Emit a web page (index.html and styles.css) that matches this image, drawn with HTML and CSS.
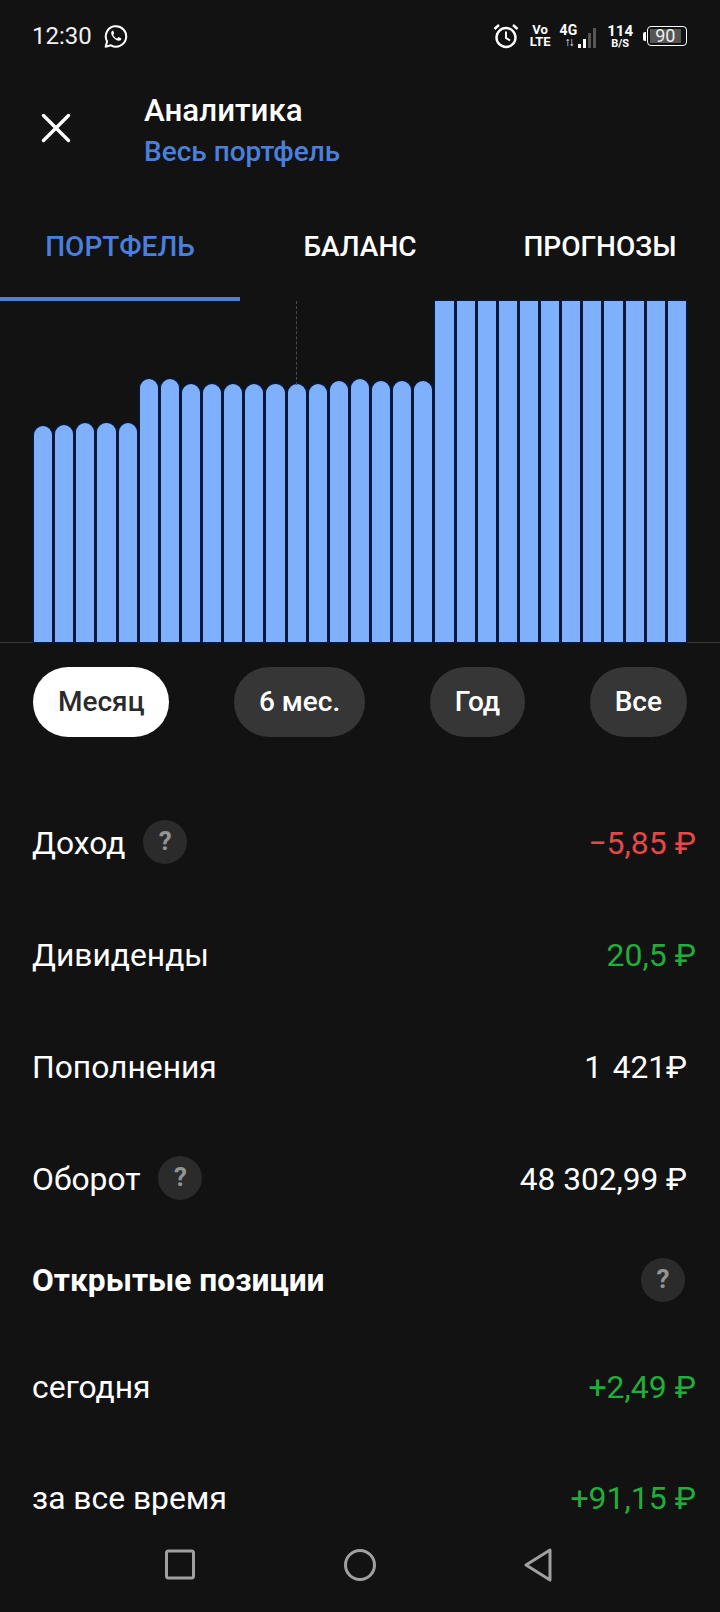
FILE: index.html
```html
<!DOCTYPE html>
<html lang="ru">
<head>
  <meta charset="UTF-8">
  <title>Аналитика</title>
  <link rel="stylesheet" href="styles.css">
</head>
<body>
  <div class="screen">
    <div class="statusbar">
      <div class="status-left">
        <span class="clock">12:30</span>
        <svg class="wa-icon" width="24" height="24" viewBox="0 0 24 24" fill="none">
          <path d="M1.6 22.8l1.5-5.4a10.2 10.2 0 1 1 3.9 3.9z" stroke="#fff" stroke-width="2" stroke-linejoin="round"/>
          <path d="M8.6 6.8c-.5 0-1.4.7-1.4 2.2 0 3.2 4.4 7.6 7.6 7.8 1.6 0 2.5-1.1 2.5-1.8 0-.5-.1-.7-.4-.8l-2-1c-.4-.2-.6-.1-.8.2l-.7.9c-.2.2-.4.2-.7.1-1.500-.6-2.900-2-3.500-3.300-.1-.3 0-.5.2-.7l.6-.7c.2-.3.2-.5.1-.8l-.8-1.900c-.2-.4-.4-.5-.7-.5z" fill="#fff"/>
        </svg>
      </div>
      <div class="status-right">
        <svg width="26" height="26" viewBox="0 0 26 26" fill="none" stroke="#fff" stroke-width="2.400">
          <circle cx="13" cy="14.500" r="9.500"/>
          <path d="M13 8.500v6.500l4 2.500" stroke-width="2"/>
          <path d="M1.500 6l4.500-4M24.500 6l-4.500-4"/>
        </svg>
        <div class="net-stack volte"><span>Vo</span><span>LTE</span></div>
        <div class="net-4g">
          <div class="net-stack"><span>4G</span><span class="arrows">↑↓</span></div>
          <div class="signal">
            <i class="lvl1"></i><i class="lvl2"></i><i class="lvl3"></i><i class="lvl4"></i>
          </div>
        </div>
        <div class="net-stack speed"><span>114</span><span class="unit">B/S</span></div>
        <div class="battery">
          <span class="battery-cap"></span>
          <span class="battery-body"><span class="battery-level">90</span></span>
        </div>
      </div>
    </div>

    <header class="header">
      <svg class="close" width="30" height="30" viewBox="0 0 30 30" stroke="#fff" stroke-width="3.400" stroke-linecap="round">
        <path d="M2.500 2.500l25 25M27.500 2.500l-25 25"/>
      </svg>
      <div class="titles">
        <div class="title">Аналитика</div>
        <div class="subtitle">Весь портфель</div>
      </div>
    </header>

    <nav class="tabs">
      <div class="tab active">ПОРТФЕЛЬ</div>
      <div class="tab">БАЛАНС</div>
      <div class="tab">ПРОГНОЗЫ</div>
    </nav>

    <div class="chart">
      <div class="cursor"></div>
      <div class="bar" style="height:216px"></div>
      <div class="bar" style="height:217px"></div>
      <div class="bar" style="height:219px"></div>
      <div class="bar" style="height:219px"></div>
      <div class="bar" style="height:219px"></div>
      <div class="bar" style="height:263px"></div>
      <div class="bar" style="height:263px"></div>
      <div class="bar" style="height:258px"></div>
      <div class="bar" style="height:258px"></div>
      <div class="bar" style="height:258px"></div>
      <div class="bar" style="height:258px"></div>
      <div class="bar" style="height:258px"></div>
      <div class="bar" style="height:258px"></div>
      <div class="bar" style="height:258px"></div>
      <div class="bar" style="height:261px"></div>
      <div class="bar" style="height:263px"></div>
      <div class="bar" style="height:261px"></div>
      <div class="bar" style="height:261px"></div>
      <div class="bar" style="height:261px"></div>
      <div class="bar full"></div>
      <div class="bar full"></div>
      <div class="bar full"></div>
      <div class="bar full"></div>
      <div class="bar full"></div>
      <div class="bar full"></div>
      <div class="bar full"></div>
      <div class="bar full"></div>
      <div class="bar full"></div>
      <div class="bar full"></div>
      <div class="bar full"></div>
      <div class="bar full"></div>
    </div>

    <div class="periods">
      <div class="pill selected">Месяц</div>
      <div class="pill">6 мес.</div>
      <div class="pill">Год</div>
      <div class="pill">Все</div>
    </div>

    <div class="rows">
      <div class="row">
        <div class="label">Доход <span class="help">?</span></div>
        <div class="value neg">−5,85 ₽</div>
      </div>
      <div class="row">
        <div class="label">Дивиденды</div>
        <div class="value pos">20,5 ₽</div>
      </div>
      <div class="row">
        <div class="label">Пополнения</div>
        <div class="value plain wide">1 421₽</div>
      </div>
      <div class="row">
        <div class="label">Оборот <span class="help">?</span></div>
        <div class="value plain">48 302,99 ₽</div>
      </div>
      <div class="row row-section">
        <div class="label section">Открытые позиции</div>
        <span class="help">?</span>
      </div>
      <div class="row row-today">
        <div class="label">сегодня</div>
        <div class="value pos">+2,49 ₽</div>
      </div>
      <div class="row row-last">
        <div class="label">за все время</div>
        <div class="value pos">+91,15 ₽</div>
      </div>
    </div>

    <div class="navbar">
      <svg width="30" height="32" viewBox="0 0 30 32" fill="none" stroke="#a0a0a0" stroke-width="3">
        <rect x="1.500" y="2" width="27" height="27" rx="2"/>
      </svg>
      <svg width="32" height="32" viewBox="0 0 32 32" fill="none" stroke="#a0a0a0" stroke-width="3">
        <circle cx="16" cy="16" r="14.500"/>
      </svg>
      <svg width="28" height="34" viewBox="0 0 28 34" fill="none" stroke="#a0a0a0" stroke-width="3" stroke-linejoin="round">
        <path d="M26 2v30L2 17z"/>
      </svg>
    </div>
  </div>
</body>
</html>
```

FILE: styles.css
```css
* {
  box-sizing: border-box;
}
body {
  margin: 0;
  background-color: #121212;
  color: #fff;
  font-family: Roboto, "Noto Sans", sans-serif;
}
.screen {
  width: 720px;
  height: 1612px;
  display: flex;
  flex-direction: column;
  overflow: hidden;
}

/* status bar */
.statusbar {
  height: 72px;
  padding: 0 33px 0 32px;
  display: flex;
  justify-content: space-between;
  align-items: center;
}
.status-left {
  display: flex;
  align-items: center;
  gap: 12px;
}
.clock {
  font-size: 24px;
  color: #f0f0f0;
}
.status-right {
  display: flex;
  align-items: center;
}
.net-stack {
  display: flex;
  flex-direction: column;
  align-items: center;
  font-size: 13px;
  font-weight: 700;
  line-height: 12px;
}
.volte {
  margin-left: 11px;
}
.net-4g {
  margin-left: 9px;
  display: flex;
  align-items: flex-end;
}
.net-4g .net-stack span:first-child {
  font-size: 14px;
}
.arrows {
  font-size: 12px;
  letter-spacing: -2px;
}
.signal {
  margin-left: 1px;
  display: flex;
  align-items: flex-end;
  gap: 2px;
}
.signal i {
  width: 3px;
  display: block;
  background-color: #fff;
}
.signal .lvl1 { height: 4px; }
.signal .lvl2 { height: 9px; }
.signal .lvl3 { height: 15px; background-color: #555; }
.signal .lvl4 { height: 20px; background-color: #555; }
.speed {
  margin-left: 11px;
}
.speed span:first-child {
  font-size: 15px;
  line-height: 14px;
}
.speed .unit {
  font-size: 11px;
  line-height: 11px;
}
.battery {
  margin-left: 10px;
  display: flex;
  align-items: center;
}
.battery-cap {
  width: 3px;
  height: 9px;
  background-color: #fff;
  border-radius: 2px 0 0 2px;
  margin-right: 1px;
}
.battery-body {
  width: 40px;
  height: 20px;
  padding: 2px;
  border: 1.500px solid #fff;
  border-radius: 4px;
  display: flex;
}
.battery-level {
  width: 90%;
  background-color: #555;
  font-size: 18px;
  line-height: 14px;
  text-align: center;
  color: #eee;
}

/* header */
.header {
  height: 102px;
  padding-left: 41px;
  display: flex;
  align-items: center;
}
.close {
  margin-top: 10px;
}
.titles {
  margin-left: 73px;
  margin-top: 20px;
}
.title {
  font-size: 31.300px;
  font-weight: 500;
  line-height: 38px;
}
.subtitle {
  font-size: 28px;
  font-weight: 500;
  line-height: 44px;
  color: #4a80dc;
}

/* tabs */
.tabs {
  height: 127px;
  display: grid;
  grid-template-columns: repeat(3, 240px);
}
.tab {
  padding-top: 50px;
  text-align: center;
  font-size: 28px;
  font-weight: 500;
  line-height: 46px;
}
.tab.active {
  color: #4a80dc;
  border-bottom: 4px solid #4a80dc;
}

/* chart */
.chart {
  position: relative;
  height: 342px;
  padding: 0 34px 0 34px;
  display: grid;
  grid-template-columns: repeat(31, 1fr);
  column-gap: 3px;
  align-items: end;
  border-bottom: 1px solid #3a3a3a;
}
.bar {
  background-color: #7eb0fc;
  border-radius: 9px 9px 0 0;
  box-shadow: 0 0 0 1.500px #02183c;
}
.bar.full {
  height: 100%;
  border-radius: 0;
}
.cursor {
  position: absolute;
  left: 296px;
  top: 0;
  height: 84px;
  border-left: 1px dashed #4a4a4a;
}

/* period pills */
.periods {
  padding: 24px 33px 0 33px;
  display: flex;
  justify-content: space-between;
}
.pill {
  height: 70px;
  padding: 0 25px;
  border-radius: 35px;
  background-color: #363636;
  font-size: 28px;
  font-weight: 500;
  line-height: 70px;
}
.pill.selected {
  background-color: #fff;
  color: #2a2a2a;
}

/* rows */
.rows {
  flex: 1;
  padding: 50px 33px 0 32px;
  display: flex;
  flex-direction: column;
}
.row {
  height: 112px;
  flex-shrink: 0;
  display: flex;
  justify-content: space-between;
  align-items: center;
}
.row-section {
  height: 90px;
}
.row-today {
  height: 124px;
}
.row-last {
  height: 98px;
}
.label {
  display: flex;
  align-items: center;
  font-size: 31.800px;
  white-space: pre;
}
.section {
  font-size: 31.700px;
  font-weight: 700;
}
.help {
  width: 44px;
  height: 44px;
  margin-left: 10px;
  margin-top: -3px;
  border-radius: 50%;
  background-color: #2b2b2b;
  color: #949494;
  font-size: 26px;
  font-weight: 700;
  line-height: 42px;
  text-align: center;
}
.row-section .help {
  margin: 0 2px 0 0;
}
.value {
  font-size: 32px;
}
.value.neg {
  margin-right: -9px;
  color: #e5484a;
}
.value.pos {
  margin-right: -9px;
  color: #22ad3a;
}
.value.plain {
  font-size: 31.600px;
  color: #fff;
}
.value.wide {
  word-spacing: 3px;
}

/* bottom nav */
.navbar {
  position: absolute;
  top: 1532px;
  left: 0;
  width: 720px;
  height: 80px;
  padding: 0 168px 14px 165px;
  background-color: #121212;
  display: flex;
  justify-content: space-between;
  align-items: center;
}
```
